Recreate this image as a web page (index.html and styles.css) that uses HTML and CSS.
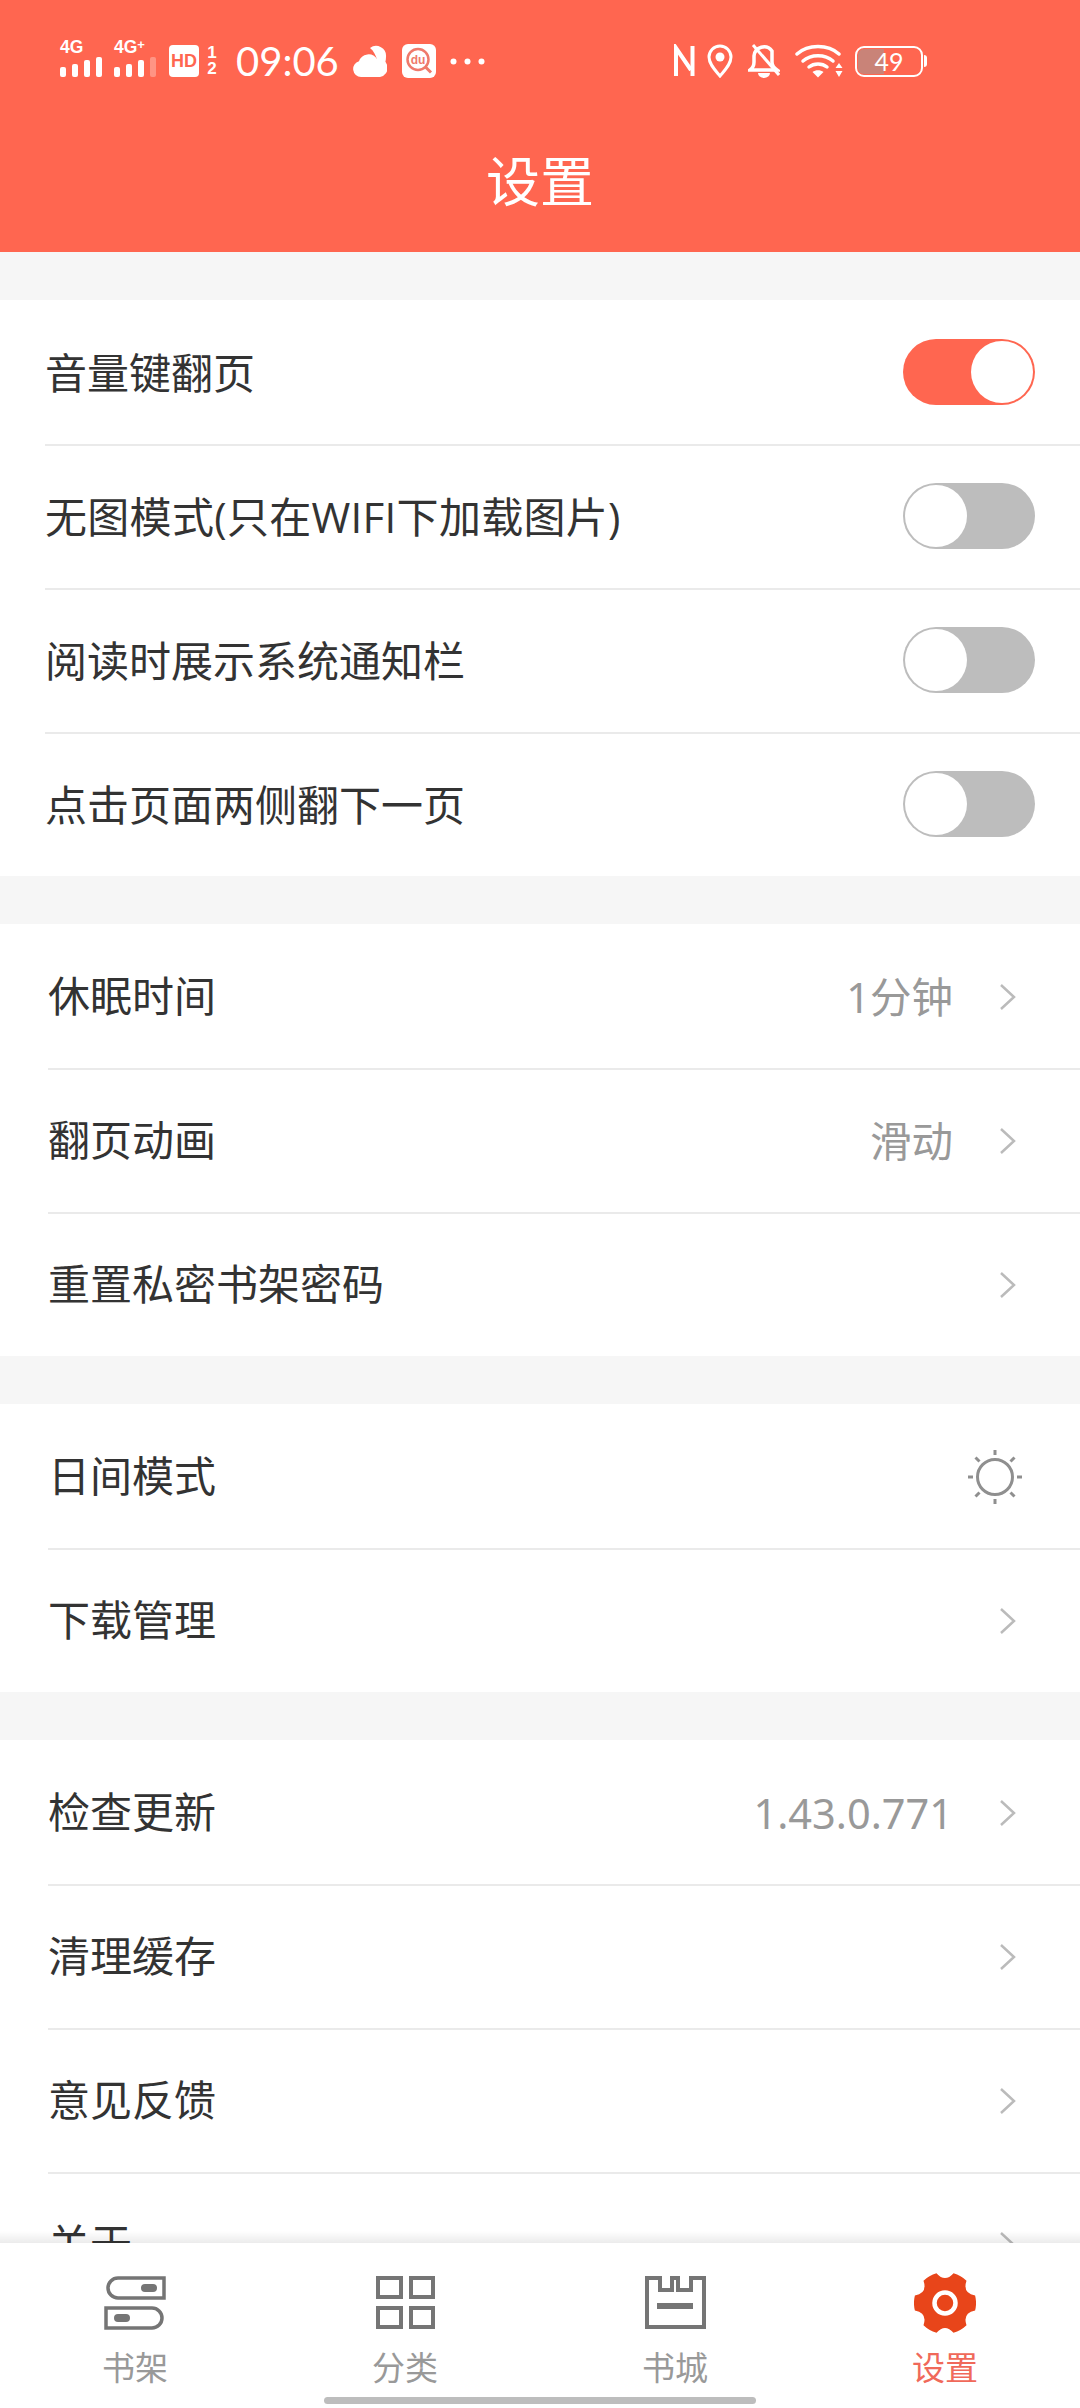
FILE: index.html
```html
<!DOCTYPE html>
<html>
<head>
  <meta charset="utf-8">
  <link rel="stylesheet" href="styles.css">
  <title>设置</title>
</head>
<body>
<div class="phone">
  <header class="header">
    <div class="statusbar">
      <div class="status-left">
        <div class="signal">
          <span class="net">4G</span>
          <svg width="42" height="20" viewBox="0 0 42 20"><rect x="0" y="10" width="6" height="10" rx="2"/><rect x="12" y="7" width="6" height="13" rx="2"/><rect x="24" y="3" width="6" height="17" rx="2"/><rect x="36" y="0" width="6" height="20" rx="2"/></svg>
        </div>
        <div class="signal signal-second">
          <div class="net"><span>4G</span><span class="net-plus">+</span></div>
          <svg width="42" height="20" viewBox="0 0 42 20"><rect x="0" y="10" width="6" height="10" rx="2"/><rect x="12" y="7" width="6" height="13" rx="2"/><rect x="24" y="3" width="6" height="17" rx="2"/><rect x="36" y="0" width="6" height="20" rx="2" opacity=".3"/></svg>
        </div>
        <span class="hd">HD</span>
        <span class="sim"><span>1</span><span>2</span></span>
        <span class="time">09:06</span>
        <svg class="cloud" width="34" height="32" viewBox="0 0 34 32"><path d="M8 32a8 8 0 0 1-2-15.700A10 10 0 0 1 24 14a9 9 0 0 1 3 18z" fill="#fff"/><path d="M17 3a10 10 0 0 1 16 9c0 4-1 7-3 9-1-3-3-5-6-6-1-4-3-9-7-12z" fill="#fff"/></svg>
        <svg class="du" width="34" height="34" viewBox="0 0 34 34"><rect width="34" height="34" rx="6" fill="#fff"/><circle cx="16" cy="15.500" r="10.500" fill="none" stroke="#ef7a6c" stroke-width="2.500"/><path d="M23.500 23l5.500 5.500" stroke="#ef7a6c" stroke-width="3"/><text x="16" y="20" class="du-text">du</text></svg>
        <svg class="dots" width="35" height="7" viewBox="0 0 35 7"><circle cx="3.500" cy="3.500" r="3"/><circle cx="17.500" cy="3.500" r="3"/><circle cx="31.500" cy="3.500" r="3"/></svg>
      </div>
      <div class="status-right">
        <svg class="icon-nfc" width="22" height="34" viewBox="0 0 22 34" fill="none" stroke="#fff" stroke-width="4"><path d="M3 32V4l15 22"/><path d="M19.500 2v30"/></svg>
        <svg class="icon-pin" width="26" height="34" viewBox="0 0 26 34" fill="none" stroke="#fff" stroke-width="3"><path d="M13 32C8 26 2 20 2 13a11 11 0 0 1 22 0c0 7-6 13-11 19z"/><circle cx="13" cy="13" r="4.500" fill="#fff" stroke="none"/></svg>
        <svg class="icon-bell" width="32" height="34" viewBox="0 0 32 34" fill="none" stroke="#fff" stroke-width="3.500"><path d="M2 26c3-2 4-4 4-8v-6a10 10 0 0 1 18-5v11c0 4 2 6 5 8z"/><path d="M10 29a6 5 0 0 0 12 0z" fill="#fff" stroke="none"/><path d="M5 1l26 30" stroke="#fff" stroke-width="3"/></svg>
        <svg class="icon-wifi" width="48" height="34" viewBox="0 0 48 34" fill="none" stroke="#fff" stroke-width="3.500" stroke-linecap="round"><path d="M2 10c11-10 31-10 42 0"/><path d="M8 17c8-7 22-7 30 0"/><path d="M14 23c5-4 13-4 18 0"/><path d="M17.500 28c3-2.500 8-2.500 11 0L23 33.500z" fill="#fff" stroke="none"/><path d="M44 19l3.500 5h-7zM44 33l3.500-6h-7z" fill="#fff" stroke="none"/></svg>
        <div class="battery">
          <span class="battery-fill"></span>
          <span class="battery-num">49</span>
        </div>
        <span class="battery-tip"></span>
      </div>
    </div>
    <h1 class="title">设置</h1>
  </header>

  <main class="content">
    <section class="group group-first">
      <div class="row"><span class="label">音量键翻页</span><span class="switch switch-on"><i></i></span></div>
      <div class="row"><span class="label label-wide">无图模式(只在WIFI下加载图片)</span><span class="switch"><i></i></span></div>
      <div class="row"><span class="label">阅读时展示系统通知栏</span><span class="switch"><i></i></span></div>
      <div class="row"><span class="label">点击页面两侧翻下一页</span><span class="switch"><i></i></span></div>
    </section>
    <section class="group">
      <div class="row"><span class="label">休眠时间</span><span class="value">1分钟</span><svg class="chevron" width="18" height="28" viewBox="0 0 18 28"><path d="M2 2l13 12L2 26"/></svg></div>
      <div class="row"><span class="label">翻页动画</span><span class="value">滑动</span><svg class="chevron" width="18" height="28" viewBox="0 0 18 28"><path d="M2 2l13 12L2 26"/></svg></div>
      <div class="row"><span class="label">重置私密书架密码</span><svg class="chevron" width="18" height="28" viewBox="0 0 18 28"><path d="M2 2l13 12L2 26"/></svg></div>
    </section>
    <section class="group">
      <div class="row"><span class="label">日间模式</span>
        <svg class="sun" width="56" height="56" viewBox="0 0 56 56"><circle cx="28" cy="28" r="17.500"/><path d="M28 1v5M28 50v5M1 28h5M50 28h5M8.500 8.500l4 4M43.500 43.500l4 4M8.500 47.500l4-4M43.500 12.500l4-4"/></svg>
      </div>
      <div class="row"><span class="label">下载管理</span><svg class="chevron" width="18" height="28" viewBox="0 0 18 28"><path d="M2 2l13 12L2 26"/></svg></div>
    </section>
    <section class="group">
      <div class="row"><span class="label">检查更新</span><span class="value">1.43.0.771</span><svg class="chevron" width="18" height="28" viewBox="0 0 18 28"><path d="M2 2l13 12L2 26"/></svg></div>
      <div class="row"><span class="label">清理缓存</span><svg class="chevron" width="18" height="28" viewBox="0 0 18 28"><path d="M2 2l13 12L2 26"/></svg></div>
      <div class="row"><span class="label">意见反馈</span><svg class="chevron" width="18" height="28" viewBox="0 0 18 28"><path d="M2 2l13 12L2 26"/></svg></div>
      <div class="row"><span class="label">关于</span><svg class="chevron" width="18" height="28" viewBox="0 0 18 28"><path d="M2 2l13 12L2 26"/></svg></div>
    </section>
  </main>

  <nav class="tabbar">
    <span class="tab-shadow"></span>
    <a class="tab">
      <svg width="62" height="60" viewBox="0 0 62 60" fill="none" stroke="#757575" stroke-width="3.500"><path d="M60 5H14a10 10 0 0 0 0 20h46z"/><path d="M2 35h46a10 10 0 0 1 0 20H2z"/><rect x="37" y="11" width="16" height="8" rx="4" fill="#757575" stroke="none"/><rect x="10" y="41" width="16" height="8" rx="4" fill="#757575" stroke="none"/></svg>
      <span>书架</span>
    </a>
    <a class="tab">
      <svg width="62" height="60" viewBox="0 0 62 60" fill="none" stroke="#757575" stroke-width="4"><rect x="4" y="5" width="23" height="19"/><rect x="37" y="5" width="22" height="19"/><rect x="4" y="35" width="23" height="19"/><rect x="37" y="35" width="22" height="19"/></svg>
      <span>分类</span>
    </a>
    <a class="tab">
      <svg width="62" height="60" viewBox="0 0 62 60" fill="none" stroke="#757575" stroke-width="4"><path d="M3 5h13v12h12V5h6v12h13V5h13v49H3z"/><rect x="13" y="30" width="36" height="6" fill="#757575" stroke="none"/></svg>
      <span>书城</span>
    </a>
    <a class="tab tab-active">
      <svg width="62" height="60" viewBox="0 0 62 60"><path fill="#e8451a" d="M61.100 22.500Q63 30 61.100 37.500Q48.300 40 52.500 52.300Q47 57.700 39.500 59.800Q31 50 22.500 59.800Q15 57.700 9.500 52.300Q13.700 40 .9 37.500Q-1 30 .9 22.500Q13.700 20 9.500 7.700Q15 2.300 22.500 .2Q31 10 39.500 .2Q47 2.300 52.500 7.700Q48.300 20 61.100 22.500z"/><circle cx="31" cy="30" r="10.500" fill="#e8451a" stroke="#fff" stroke-width="4.500"/></svg>
      <span>设置</span>
    </a>
    <span class="home-bar"></span>
  </nav>
</div>
</body>
</html>
```

FILE: styles.css
```css
html, body { margin: 0; padding: 0; }

body {
  font-family: "Noto Sans", "Noto Sans CJK SC", sans-serif;
  background: #fff;
  color: #333;
}

.phone {
  width: 1080px;
  height: 2408px;
  display: flex;
  flex-direction: column;
  overflow: hidden;
}

/* header + status bar */
.header {
  height: 252px;
  flex: none;
  background: #ff6650;
  color: #fff;
}

.statusbar {
  height: 122px;
  display: flex;
  justify-content: space-between;
  align-items: center;
  padding: 0 153px 0 60px;
}

.status-left, .status-right {
  display: flex;
  align-items: center;
}

.signal {
  display: flex;
  flex-direction: column;
  align-items: flex-start;
  fill: #fff;
  margin: 0 12px 8px 0;
}

.signal-second { margin-right: 13px; }

.net {
  display: flex;
  font-family: "Liberation Sans", sans-serif;
  font-size: 17.5px;
  font-weight: bold;
  line-height: 19px;
}

.net-plus {
  font-size: 13px;
  line-height: 13px;
}

.hd {
  width: 30px;
  height: 32px;
  background: #fff;
  border-radius: 4px;
  color: #ff6650;
  font-family: "Liberation Sans", sans-serif;
  font-size: 18px;
  font-weight: bold;
  line-height: 32px;
  text-align: center;
}

.sim {
  display: flex;
  flex-direction: column;
  width: 14px;
  margin: 0 17px 0 6px;
  font-family: "Liberation Sans", sans-serif;
  font-size: 17px;
  font-weight: bold;
  line-height: 16px;
  text-align: center;
}

.time {
  font-family: Lato, sans-serif;
  font-size: 40px;
  line-height: 48px;
  width: 117px;
}

.cloud { margin-right: 15px; }
.du { margin-right: 14px; }
.dots { fill: #fff; }

.du-text {
  font-family: "Liberation Sans", sans-serif;
  font-size: 12px;
  font-weight: bold;
  fill: #ef7a6c;
  text-anchor: middle;
}

.icon-nfc { margin-right: 12px; }
.icon-pin { margin-right: 15px; }
.icon-bell { margin-right: 15px; }
.icon-wifi { margin-right: 12px; }

.battery {
  position: relative;
  width: 64px;
  height: 27px;
  border: 2.5px solid #fff;
  border-radius: 9px;
  overflow: hidden;
  display: flex;
  align-items: center;
  justify-content: center;
}

.battery-fill {
  position: absolute;
  left: 1px;
  top: 1px;
  bottom: 1px;
  width: 26px;
  border-radius: 6px 0 0 6px;
  background: #c98378;
}

.battery-num {
  position: relative;
  font-family: Lato, sans-serif;
  font-size: 25px;
  line-height: 27px;
}

.battery-tip {
  width: 3px;
  height: 12px;
  margin-left: 1px;
  background: #fff;
  border-radius: 0 3px 3px 0;
}

.title {
  margin: 0;
  height: 118px;
  font-size: 54px;
  font-weight: 400;
  line-height: 118px;
  text-align: center;
}

/* settings list */
.content {
  flex: 1;
  min-height: 0;
  overflow: hidden;
  background: #f6f6f6;
  padding-top: 48px;
}

.group {
  background: #fff;
  margin-bottom: 48px;
  padding: 2px 0 0 48px;
}

.group-first { padding-left: 45px; }

.row {
  height: 144px;
  box-sizing: border-box;
  display: flex;
  align-items: center;
  padding-right: 63px;
  border-bottom: 2px solid #eaeaea;
}

.group-first .row {
  padding-right: 45px;
  padding-bottom: 3px;
}

.row:last-child {
  height: 142px;
  border-bottom: 0;
}

.label {
  flex: 1;
  font-family: "Open Sans", "Noto Sans CJK SC", sans-serif;
  font-size: 42px;
  line-height: 56px;
  color: #333;
  margin-bottom: 2px;
}

.group-first .label {
  margin: 3px 0 0;
}

.label-wide { letter-spacing: .3px; }

.value {
  font-size: 41.5px;
  line-height: 56px;
  color: #999;
  margin-right: 46px;
}

.chevron {
  fill: none;
  stroke: #bbb;
  stroke-width: 2.5;
}

.sun {
  margin-right: -6px;
  fill: none;
  stroke: #8f8f8f;
  stroke-width: 3;
}

/* toggle */
.switch {
  width: 132px;
  height: 66px;
  box-sizing: border-box;
  padding: 2px;
  border-radius: 33px;
  background: #bdbdbd;
  display: flex;
}

.switch i {
  width: 62px;
  height: 62px;
  border-radius: 50%;
  background: #fff;
}

.switch-on {
  background: #ff6650;
  justify-content: flex-end;
}

/* bottom nav */
.tabbar {
  position: relative;
  flex: none;
  height: 165px;
  box-sizing: border-box;
  background: #fff;
  display: flex;
  padding-top: 30px;
}

.tab-shadow {
  position: absolute;
  left: 0;
  right: 0;
  top: -12px;
  height: 12px;
  background: linear-gradient(rgba(0,0,0,0), rgba(0,0,0,.08));
}

.tab {
  flex: 1;
  display: flex;
  flex-direction: column;
  align-items: center;
  font-size: 33px;
  line-height: 44px;
  color: #999;
}

.tab svg { margin-bottom: 13px; }
.tab-active { color: #f0695a; }

.home-bar {
  position: absolute;
  left: 324px;
  width: 432px;
  bottom: 4px;
  height: 7px;
  border-radius: 4px;
  background: #bdbdbd;
}
```
